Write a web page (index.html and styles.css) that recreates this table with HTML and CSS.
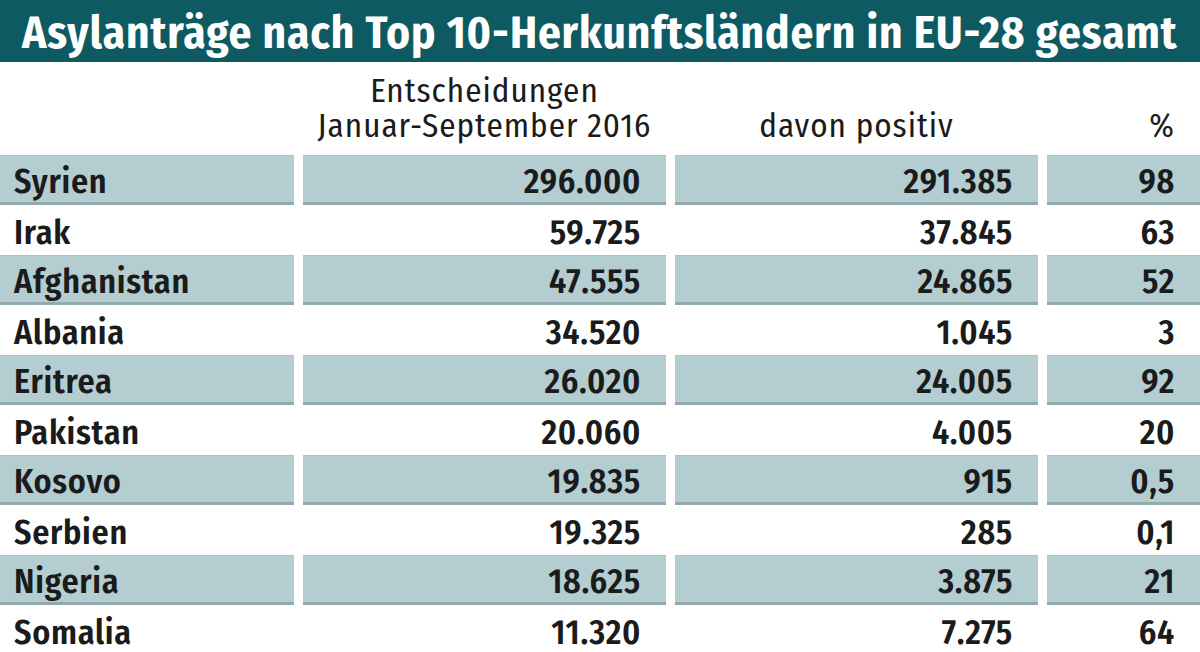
FILE: index.html
```html
<!DOCTYPE html>
<html lang="de">
<head>
<meta charset="utf-8">
<title>Asylanträge</title>
<link rel="stylesheet" href="styles.css">
</head>
<body>
<div class="chart">
  <h1 class="title">Asylanträge nach Top 10-Herkunftsländern in EU-28 gesamt</h1>
  <div class="grid head">
    <div></div>
    <div class="hc center"><div class="hl">Entscheidungen</div><div class="hl">Januar-September 2016</div></div>
    <div class="hc center">davon positiv</div>
    <div class="hc right">%</div>
  </div>
  <div class="grid row band"><div class="c name">Syrien</div><div class="c num">296.000</div><div class="c num">291.385</div><div class="c num">98</div></div>
  <div class="grid row"><div class="c name">Irak</div><div class="c num">59.725</div><div class="c num">37.845</div><div class="c num">63</div></div>
  <div class="grid row band"><div class="c name">Afghanistan</div><div class="c num">47.555</div><div class="c num">24.865</div><div class="c num">52</div></div>
  <div class="grid row"><div class="c name">Albania</div><div class="c num">34.520</div><div class="c num">1.045</div><div class="c num">3</div></div>
  <div class="grid row band"><div class="c name">Eritrea</div><div class="c num">26.020</div><div class="c num">24.005</div><div class="c num">92</div></div>
  <div class="grid row"><div class="c name">Pakistan</div><div class="c num">20.060</div><div class="c num">4.005</div><div class="c num">20</div></div>
  <div class="grid row band"><div class="c name">Kosovo</div><div class="c num">19.835</div><div class="c num">915</div><div class="c num">0,5</div></div>
  <div class="grid row"><div class="c name">Serbien</div><div class="c num">19.325</div><div class="c num">285</div><div class="c num">0,1</div></div>
  <div class="grid row band"><div class="c name">Nigeria</div><div class="c num">18.625</div><div class="c num">3.875</div><div class="c num">21</div></div>
  <div class="grid row"><div class="c name">Somalia</div><div class="c num">11.320</div><div class="c num">7.275</div><div class="c num">64</div></div>
</div>
</body>
</html>
```
FILE: styles.css
```css
html, body {
  margin: 0;
  padding: 0;
  background: #ffffff;
}
.chart {
  width: 1200px;
  height: 652px;
  overflow: hidden;
  font-family: "Fira Sans Condensed", "Open Sans Condensed", sans-serif;
  color: #1b1b1b;
}
.title {
  margin: 0;
  box-sizing: border-box;
  height: 62px;
  padding-top: 4px;
  padding-left: 22px;
  background: #0e5a62;
  color: #ffffff;
  font-size: 45px;
  font-weight: 700;
  line-height: 58px;
  white-space: nowrap;
  letter-spacing: 0.92px;
}
.grid {
  display: grid;
  grid-template-columns: 294px 363px 363px 153px;
  column-gap: 9px;
}
.head {
  height: 93px;
  align-items: end;
}
.hc {
  font-size: 33px;
  font-weight: 400;
  line-height: 35px;
  letter-spacing: 1px;
  padding-bottom: 11px;
}
.hl {
  height: 35px;
}
.center { text-align: center; }
.right { text-align: right; padding-right: 26px; letter-spacing: 0; }
.row {
  height: 50px;
}
.c {
  display: flex;
  align-items: center;
  font-size: 34px;
  font-weight: 600;
  letter-spacing: 0.7px;
  box-sizing: border-box;
  height: 50px;
  padding-top: 4px;
}
.band .c {
  background: #b4cdd0;
  border-top: 1px solid #a9c1c4;
  border-bottom: 3px solid #93aaad;
}
.name {
  padding-left: 14px;
}
.num {
  justify-content: flex-end;
  padding-right: 25px;
}
```
